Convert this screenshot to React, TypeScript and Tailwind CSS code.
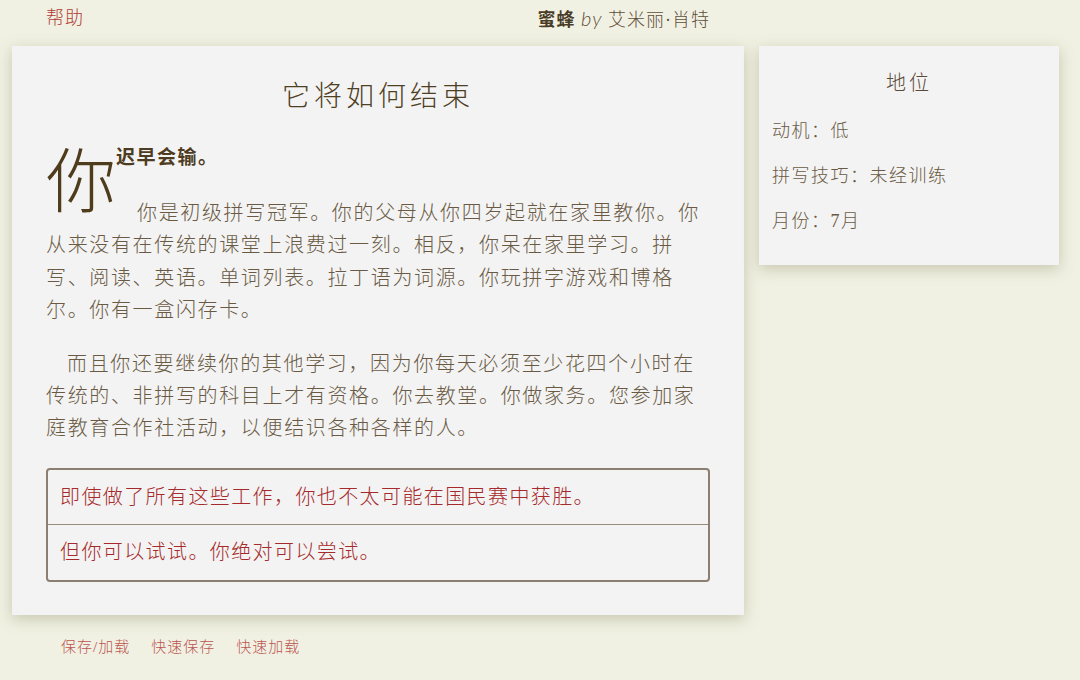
import React from "react";

const font = "font-['Liberation_Serif','Noto_Sans_CJK_SC',serif]";

function Choice({ text, last }: { text: string; last?: boolean }) {
  return (
    <div
      className={
        "flex h-[55px] items-center px-3 text-[20px] tracking-[1.4px] text-[#a62a2b] " +
        (last ? "" : "border-b border-[#9a8a7c]")
      }
    >
      {text}
    </div>
  );
}

export default function App() {
  return (
    <div className={`min-h-[680px] bg-[#f1f1e3] ${font} font-light`}>
      <div className="flex gap-[15px] pl-[12px]">
        {/* left column */}
        <div className="w-[732px] shrink-0">
          <header className="flex h-[46px] items-center justify-between px-[34px] pb-[10px]">
            <a className="text-[18px] tracking-[1px] text-[#b03a36]">帮助</a>
            <div className="text-[18px] tracking-[1px] text-[#5e4e38]">
              <span className="font-bold text-[#4a3d28]">蜜蜂</span>{" "}
              <span className="font-['Lato',sans-serif] italic text-[20px]">by</span>{" "}
              艾米丽·肖特
            </div>
          </header>

          <main className="bg-[#f3f3f3] px-[34px] pt-[30px] pb-[33px] shadow-[0_4px_14px_rgba(120,120,80,0.35)]">
            <h1 className="text-center text-[28px] leading-[42px] tracking-[4px] text-[#4e3f25] mb-[22px]">
              它将如何结束
            </h1>

            <div className="text-[20px] leading-[32.4px] tracking-[1.65px] text-[#6a5a44]">
              <span className="float-left block h-[80px] pt-[9px] text-[70px] leading-[70px] tracking-normal text-[#4e3c1c]">
                你
              </span>
              <p className="mb-[21px] text-[19px] leading-[36px] font-bold tracking-[1.5px] text-[#4e3c22]">
                迟早会输。
              </p>
              <p className="mb-[21px] indent-[21px]">
                你是初级拼写冠军。你的父母从你四岁起就在家里教你。你从来没有在传统的课堂上浪费过一刻。相反，你呆在家里学习。拼写、阅读、英语。单词列表。拉丁语为词源。你玩拼字游戏和博格尔。你有一盒闪存卡。
              </p>
              <p className="mb-[23px] indent-[21px]">
                而且你还要继续你的其他学习，因为你每天必须至少花四个小时在传统的、非拼写的科目上才有资格。你去教堂。你做家务。您参加家庭教育合作社活动，以便结识各种各样的人。
              </p>
            </div>

            <div className="overflow-hidden rounded-[4px] border-2 border-[#8c7e70]">
              <Choice text="即使做了所有这些工作，你也不太可能在国民赛中获胜。" />
              <Choice text="但你可以试试。你绝对可以尝试。" last />
            </div>
          </main>

          <footer className="flex gap-[21px] px-[49px] pt-[21px] text-[15px] tracking-[1px] text-[#bb5550]">
            <a>保存/加载</a>
            <a>快速保存</a>
            <a>快速加载</a>
          </footer>
        </div>

        {/* side column */}
        <aside className="mt-[46px] h-[219px] w-[300px] shrink-0 bg-[#f3f3f3] px-[13px] pt-[22px] shadow-[0_4px_14px_rgba(120,120,80,0.35)] text-[#6a5a44]">
          <h2 className="text-center text-[20px] leading-[30px] tracking-[3px] text-[#5a4a36]">地位</h2>
          <ul className="mt-[11px] text-[18px] tracking-[1.5px]">
            <li className="h-[45px] leading-[45px]">动机：低</li>
            <li className="h-[45px] leading-[45px]">拼写技巧：未经训练</li>
            <li className="h-[45px] leading-[45px]">月份：7月</li>
          </ul>
        </aside>
      </div>
    </div>
  );
}
